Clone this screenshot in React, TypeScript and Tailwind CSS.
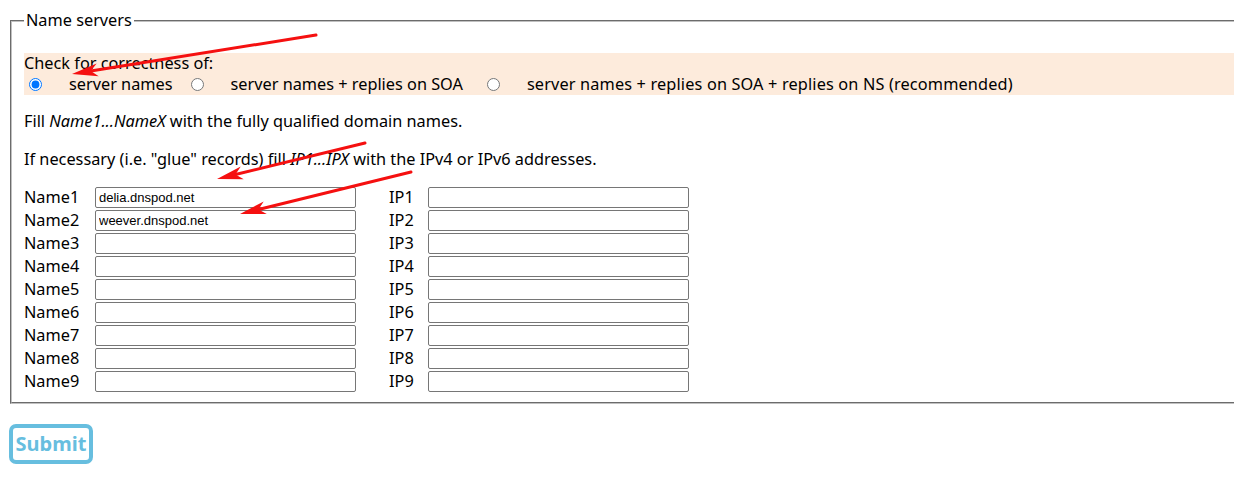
import React from "react";

const rows = [1, 2, 3, 4, 5, 6, 7, 8, 9];
const names: Record<number, string> = { 1: "delia.dnspod.net", 2: "weever.dnspod.net" };

function Arrow({ x1, y1, x2, y2 }: { x1: number; y1: number; x2: number; y2: number }) {
  const dx = x2 - x1;
  const dy = y2 - y1;
  const len = Math.hypot(dx, dy);
  const ux = dx / len;
  const uy = dy / len;
  const px = -uy;
  const py = ux;
  const hl = 26;
  const hw = 6.5;
  const bx = x2 - ux * hl;
  const by = y2 - uy * hl;
  const nx = x2 - ux * (hl - 7);
  const ny = y2 - uy * (hl - 7);
  const pts = [
    [x2, y2],
    [bx + px * hw, by + py * hw],
    [nx, ny],
    [bx - px * hw, by - py * hw],
  ]
    .map((p) => p.join(","))
    .join(" ");
  return (
    <g>
      <line x1={x1} y1={y1} x2={nx} y2={ny} stroke="#f51010" strokeWidth={3} strokeLinecap="round" />
      <polygon points={pts} fill="#f51010" />
    </g>
  );
}

export default function App() {
  return (
    <div className="relative w-full h-[487px] overflow-hidden bg-white text-black text-[16.3px] leading-[21px] font-['Noto_Sans',sans-serif]">
      <div className="pt-[10px] pl-[10px]">
        <fieldset className="w-[1240px] border-2 [border-style:groove] border-[#c0c0c0] px-[12px] pt-[4px] pb-[9px]">
          <legend className="px-[2px]">Name servers</legend>
          <div className="mt-[18px] bg-[#fdebdc]">
            <div>Check for correctness of:</div>
            <div className="flex items-center">
              <input type="radio" name="chk" defaultChecked className="ml-[5px] w-[13px] h-[13px] accent-[#0075ff]" />
              <span className="ml-[27px]">server names</span>
              <input type="radio" name="chk" className="ml-[18px] w-[13px] h-[13px]" />
              <span className="ml-[27px]">server names + replies on SOA</span>
              <input type="radio" name="chk" className="ml-[24px] w-[13px] h-[13px]" />
              <span className="ml-[27px] tracking-[0.15px]">server names + replies on SOA + replies on NS (recommended)</span>
            </div>
          </div>
          <p className="mt-[16px]">
            Fill <i>Name1...NameX</i> with the fully qualified domain names.
          </p>
          <p className="mt-[17px]">
            If necessary (i.e. "glue" records) fill <i>IP1...IPX</i> with the IPv4 or IPv6 addresses.
          </p>
          <div className="mt-[16px] grid grid-cols-[71px_294px_39px_261px] auto-rows-[23px] items-center">
            {rows.map((n) => (
              <React.Fragment key={n}>
                <span>Name{n}</span>
                <input
                  type="text"
                  defaultValue={names[n] ?? ""}
                  className="w-[261px] h-[21px] border border-[#767676] rounded-[2px] px-[3px] font-['Liberation_Sans',Arial,sans-serif] text-[13px] text-black"
                />
                <span>IP{n}</span>
                <input
                  type="text"
                  className="w-[261px] h-[21px] border border-[#767676] rounded-[2px] px-[3px] font-['Liberation_Sans',Arial,sans-serif] text-[13px]"
                />
              </React.Fragment>
            ))}
          </div>
        </fieldset>
      </div>
      <div className="mt-[20px] ml-[9px]">
        <button className="w-[84px] h-[40px] border-[4px] border-[#67bedf] rounded-[7px] bg-white text-[#67bedf] font-bold text-[20px] leading-none">
          Submit
        </button>
      </div>
      <svg className="absolute inset-0 pointer-events-none" width="1234" height="487">
        <Arrow x1={316} y1={35} x2={72} y2={74} />
        <Arrow x1={365} y1={143} x2={217} y2={179} />
        <Arrow x1={411} y1={172} x2={240} y2={214} />
      </svg>
    </div>
  );
}
